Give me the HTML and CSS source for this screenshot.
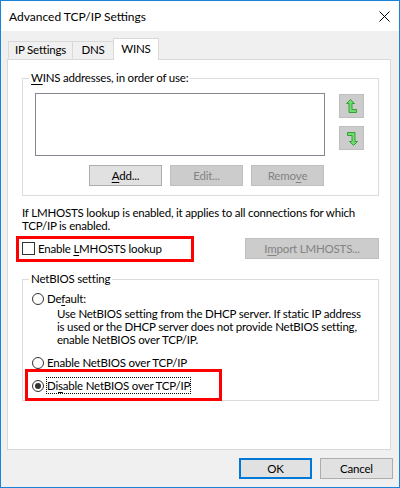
FILE: index.html
```html
<!DOCTYPE html>
<html>
<head>
<meta charset="utf-8">
<title>Advanced TCP/IP Settings</title>
<link rel="stylesheet" href="styles.css">
</head>
<body>
<div class="window">
  <div class="titlebar">
    <span class="title">Advanced TCP/IP Settings</span>
    <svg class="close" width="11" height="11" viewBox="0 0 11 11"><path d="M0.5 0.5 L10.5 10.5 M10.5 0.5 L0.5 10.5" stroke="#000" stroke-width="1" fill="none"/></svg>
  </div>
  <div class="client">
    <div class="tabs">
      <div class="tab tab-ip">IP Settings</div>
      <div class="tab tab-dns">DNS</div>
      <div class="tab tab-wins active">WINS</div>
    </div>
    <div class="panel">
      <fieldset class="group wins">
        <legend><u>W</u>INS addresses, in order of use:</legend>
        <div class="wins-top">
          <div class="listbox"></div>
          <div class="arrows">
            <div class="btn arrow-btn">
              <svg width="12" height="15" viewBox="0 0 12 15"><path d="M4.5 0.5 L0.5 4.5 L3 4.5 L3 13.5 L10.5 13.5 L10.5 10.5 L6 10.5 L6 4.5 L8.5 4.5 Z" fill="#72da72" stroke="#35a035" stroke-width="1"/></svg>
            </div>
            <div class="btn arrow-btn">
              <svg width="12" height="15" viewBox="0 0 12 15"><path d="M7.5 14.5 L11.5 10.5 L9 10.5 L9 1.5 L1.5 1.5 L1.5 4.5 L6 4.5 L6 10.5 L3.5 10.5 Z" fill="#72da72" stroke="#35a035" stroke-width="1"/></svg>
            </div>
          </div>
        </div>
        <div class="wins-buttons">
          <div class="btn"><u>A</u>dd...</div>
          <div class="btn disabled">Edit...</div>
          <div class="btn disabled">Remo<u>v</u>e</div>
        </div>
      </fieldset>
      <p class="info">If LMHOSTS lookup is enabled, it applies to all connections for which<br>TCP/IP is enabled.</p>
      <div class="lm-row">
        <div class="check"><span class="box"></span><span>Enable <u>L</u>MHOSTS lookup</span></div>
        <div class="btn disabled import">I<u>m</u>port LMHOSTS...</div>
      </div>
      <fieldset class="group netbios">
        <legend>NetBIOS setting</legend>
        <div class="radio r-default"><span class="circle"></span><span>De<u>f</u>ault:</span></div>
        <p class="desc">Use NetBIOS setting from the DHCP server. If static IP address<br>is used or the DHCP server does not provide NetBIOS setting,<br>enable NetBIOS over TCP/IP.</p>
        <div class="radio r-enable"><span class="circle"></span><span>E<u>n</u>able NetBIOS over TCP/IP</span></div>
        <div class="radio r-disable"><span class="circle checked"></span><span class="focus">Di<u>s</u>able NetBIOS over TCP/IP</span></div>
      </fieldset>
    </div>
    <div class="footer">
      <div class="btn default">OK</div>
      <div class="btn">Cancel</div>
    </div>
  </div>
  <div class="mark mark-lm"></div>
  <div class="mark mark-disable"></div>
</div>
</body>
</html>
```
FILE: styles.css
```css
* { box-sizing: border-box; }
html, body { margin: 0; padding: 0; background: #fff; }
body {
  font-family: Lato, "Noto Sans", sans-serif;
  font-size: 11.5px;
  letter-spacing: -0.2px;
  color: #000;
  white-space: nowrap;
}
u { text-decoration: underline; text-underline-offset: 2px; }

.window {
  position: relative;
  width: 400px;
  height: 488px;
  border: 1px solid #1883d7;
  background: #f0f0f0;
  display: flex;
  flex-direction: column;
}
.titlebar {
  height: 30px;
  background: #fff;
  display: flex;
  align-items: center;
  justify-content: space-between;
  padding: 0 9px 0 8px;
  flex-shrink: 0;
}
.title { font-size: 12px; letter-spacing: 0; line-height: 15px; padding-top: 1px; }

.client {
  flex: 1;
  display: flex;
  flex-direction: column;
}
.tabs {
  display: flex;
  align-items: flex-end;
  height: 28px;
  padding-left: 7px;
}
.tab {
  height: 18px;
  border: 1px solid #d9d9d9;
  border-bottom: none;
  background: #f0f0f0;
  text-align: center;
  line-height: 16px;
  margin-right: -1px;
}
.tab-ip { width: 65px; }
.tab-dns { width: 42px; }
.tab-wins { width: 46px; }
.tab.active {
  height: 22px;
  background: #fff;
  line-height: 20px;
  margin-bottom: -1px;
  position: relative;
  z-index: 1;
}

.panel {
  margin-left: 6px;
  width: 384px;
  height: 391px;
  background: #fff;
  border: 1px solid #d9d9d9;
  padding: 0 11px 0 14px;
}

.group {
  margin: 0;
  padding: 0;
  border: 1px solid #dcdcdc;
  min-width: 0;
}
.group legend {
  padding: 0 2px;
  margin-left: 6px;
  line-height: 14px;
}
.wins { margin-top: 11px; padding-bottom: 9px; }
.wins-top { display: flex; margin: 8px 0 0 12px; }
.listbox {
  width: 290px;
  height: 63px;
  border: 1px solid #828790;
  background: #fff;
}
.arrows {
  display: flex;
  flex-direction: column;
  gap: 8px;
  margin-left: 14px;
  margin-top: 1px;
}
.btn {
  height: 21px;
  width: 73px;
  border: 1px solid #adadad;
  background: #e1e1e1;
  display: flex;
  align-items: center;
  justify-content: center;
  line-height: 15px;
}
.btn.disabled {
  background: #cccccc;
  border-color: #bfbfbf;
  color: #838383;
}
.arrow-btn {
  width: 25px;
  height: 24px;
  background: #cccccc;
  border-color: #bfbfbf;
}
.wins-buttons {
  display: flex;
  gap: 8px;
  margin: 9px 0 0 66px;
}

.info {
  margin: 10px 0 0 0;
  line-height: 13px;
}
.lm-row {
  display: flex;
  align-items: center;
  justify-content: space-between;
  margin-top: 6px;
}
.check { display: flex; align-items: center; line-height: 15px; }
.box {
  width: 13px;
  height: 13px;
  border: 1px solid #333;
  background: #fff;
  margin-right: 3px;
}
.import { width: 134px; }

.netbios { margin-top: 13px; padding-bottom: 7px; }
.radio {
  display: flex;
  align-items: center;
  line-height: 15px;
  margin-left: 9px;
}
.circle {
  width: 12px;
  height: 12px;
  border: 1px solid #333;
  border-radius: 50%;
  background: #fff;
  margin-right: 3px;
  display: flex;
  align-items: center;
  justify-content: center;
}
.circle.checked::after {
  content: "";
  width: 6px;
  height: 6px;
  border-radius: 50%;
  background: #333;
}
.r-default { margin-top: 5px; }
.desc {
  margin: 1px 0 0 34px;
  line-height: 13px;
}
.r-enable { margin-top: 9px; }
.r-disable { margin-top: 8px; }
.focus { outline: 1px dotted #000; outline-offset: 0; }

.footer {
  display: flex;
  justify-content: flex-end;
  gap: 8px;
  padding: 8px 6px 0 0;
}
.btn.default { border: 2px solid #0078d7; }

.mark {
  position: absolute;
  border: 3px solid #ff0000;
  pointer-events: none;
}
.mark-lm { left: 15px; top: 235px; width: 178px; height: 26px; }
.mark-disable { left: 24px; top: 368px; width: 197px; height: 32px; }
```
